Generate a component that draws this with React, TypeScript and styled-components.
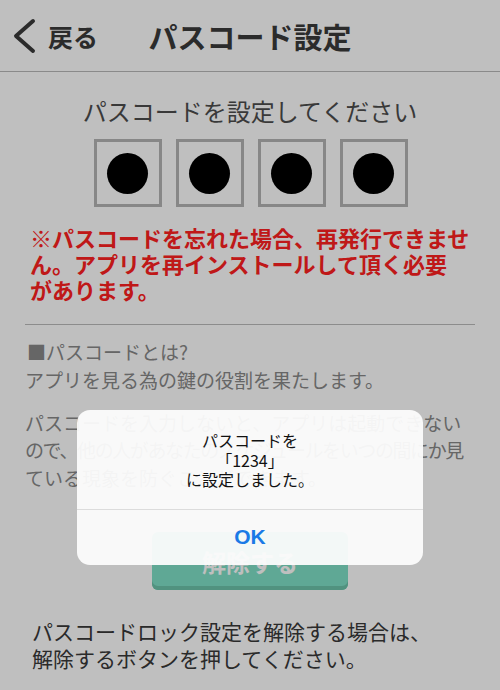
import React from "react";
import styled, { createGlobalStyle } from "styled-components";

const GlobalStyle = createGlobalStyle`
  html, body { margin: 0; padding: 0; background: #ffffff; }
  body { font-family: "Noto Sans CJK JP", "Noto Sans", sans-serif; }
  * { box-sizing: border-box; }
`;

const Page = styled.div`
  position: relative;
  width: 500px;
  height: 690px;
  overflow: hidden;
  background: #ffffff;
  font-family: "Noto Sans CJK JP", "Noto Sans", sans-serif;
`;

const Header = styled.header`
  display: grid;
  grid-template-columns: 1fr auto 1fr;
  align-items: center;
  height: 72px;
  border-bottom: 1px solid #b8b8b8;
`;

const BackButton = styled.div`
  display: flex;
  align-items: center;
  gap: 12px;
  padding-left: 12px;
  color: #3a3a3a;
  font-size: 25px;
  font-weight: 700;
`;

const Title = styled.h1`
  margin: 0;
  font-size: 29px;
  font-weight: 700;
  color: #3a3a3a;
`;

const Content = styled.main`
  display: flex;
  flex-direction: column;
  padding: 0 25px;
`;

const Prompt = styled.p`
  margin: 22px 0 0;
  text-align: center;
  font-size: 24px;
  line-height: 34px;
  color: #4d4d4d;
`;

const BoxRow = styled.div`
  display: flex;
  justify-content: center;
  gap: 14px;
  margin-top: 11px;
  padding-left: 1px;
`;

const DigitBox = styled.div`
  width: 68px;
  height: 68px;
  border: 3px solid #b5b5b5;
  display: flex;
  align-items: center;
  justify-content: center;
`;

const Dot = styled.div`
  width: 41px;
  height: 41px;
  border-radius: 50%;
  background: #000000;
`;

const Line = styled.span<{ $tracking?: number }>`
  display: block;
  white-space: nowrap;
  letter-spacing: ${(p) => p.$tracking ?? 0}px;
`;

const Warning = styled.p`
  margin: 17px 0 0;
  padding-left: 5px;
  font-size: 22px;
  line-height: 26px;
  font-weight: 700;
  color: #ff2020;
`;

const Divider = styled.hr`
  margin: 22px 0 0;
  border: none;
  border-top: 1px solid #bbbbbb;
`;

const InfoHeading = styled.p`
  margin: 13px 0 0;
  padding-left: 2px;
  font-size: 19px;
  line-height: 28px;
  color: #888888;
`;

const InfoText = styled.p<{ $gap?: number }>`
  margin: ${(p) => p.$gap ?? 0}px 0 0;
  font-size: 19px;
  line-height: 27.5px;
  color: #888888;
`;

const ActionButton = styled.button`
  align-self: center;
  margin-top: 41px;
  width: 196px;
  height: 58px;
  border: none;
  border-radius: 6px;
  background: #7fe1c7;
  box-shadow: inset 0 -4px 0 #6cc3aa;
  color: #ffffff;
  font-family: inherit;
  font-size: 24px;
  font-weight: 700;
`;

const Note = styled.p`
  margin: 28px 0 0;
  padding-left: 7px;
  font-size: 21px;
  line-height: 27px;
  color: #383838;
`;

const Overlay = styled.div`
  position: absolute;
  inset: 0;
  background: rgba(0, 0, 0, 0.25);
`;

const Dialog = styled.div`
  position: absolute;
  left: 77px;
  top: 410px;
  width: 346px;
  border-radius: 13px;
  background: rgba(253, 253, 253, 0.94);
  display: flex;
  flex-direction: column;
  overflow: hidden;
`;

const DialogMessage = styled.div`
  padding: 21px 16px 19px;
  text-align: center;
  font-size: 16px;
  line-height: 19.5px;
  color: #111111;
`;

const DialogButton = styled.div`
  height: 56px;
  border-top: 1px solid #dcdcdc;
  display: flex;
  align-items: center;
  justify-content: center;
  color: #1a7ae6;
  font-family: "Liberation Sans", "Noto Sans", sans-serif;
  font-size: 21px;
  font-weight: 700;
`;

export default function App() {
  return (
    <>
      <GlobalStyle />
      <Page>
        <Header>
          <BackButton>
            <svg width="24" height="36" viewBox="0 0 24 36">
              <polyline
                points="21,3 4,18 21,33"
                fill="none"
                stroke="#3a3a3a"
                strokeWidth="4"
                strokeLinecap="round"
                strokeLinejoin="round"
              />
            </svg>
            <span>戻る</span>
          </BackButton>
          <Title>パスコード設定</Title>
          <span />
        </Header>
        <Content>
          <Prompt>パスコードを設定してください</Prompt>
          <BoxRow>
            {[0, 1, 2, 3].map((i) => (
              <DigitBox key={i}>
                <Dot />
              </DigitBox>
            ))}
          </BoxRow>
          <Warning>
            <Line>※パスコードを忘れた場合、再発行できませ</Line>
            <Line>ん。アプリを再インストールして頂く必要</Line>
            <Line>があります。</Line>
          </Warning>
          <Divider />
          <InfoHeading>■パスコードとは?</InfoHeading>
          <InfoText>アプリを見る為の鍵の役割を果たします。</InfoText>
          <InfoText $gap={15}>
            <Line>パスコードを入力しないと、アプリは起動できない</Line>
            <Line $tracking={-1.4}>ので、他の人があなたのスケジュールをいつの間にか見</Line>
            <Line>ている現象を防ぐことができます。</Line>
          </InfoText>
          <ActionButton>解除する</ActionButton>
          <Note>
            <Line>パスコードロック設定を解除する場合は、</Line>
            <Line>解除するボタンを押してください。</Line>
          </Note>
        </Content>
        <Overlay />
        <Dialog>
          <DialogMessage>
            パスコードを
            <br />
            「1234」
            <br />
            に設定しました。
          </DialogMessage>
          <DialogButton>OK</DialogButton>
        </Dialog>
      </Page>
    </>
  );
}
